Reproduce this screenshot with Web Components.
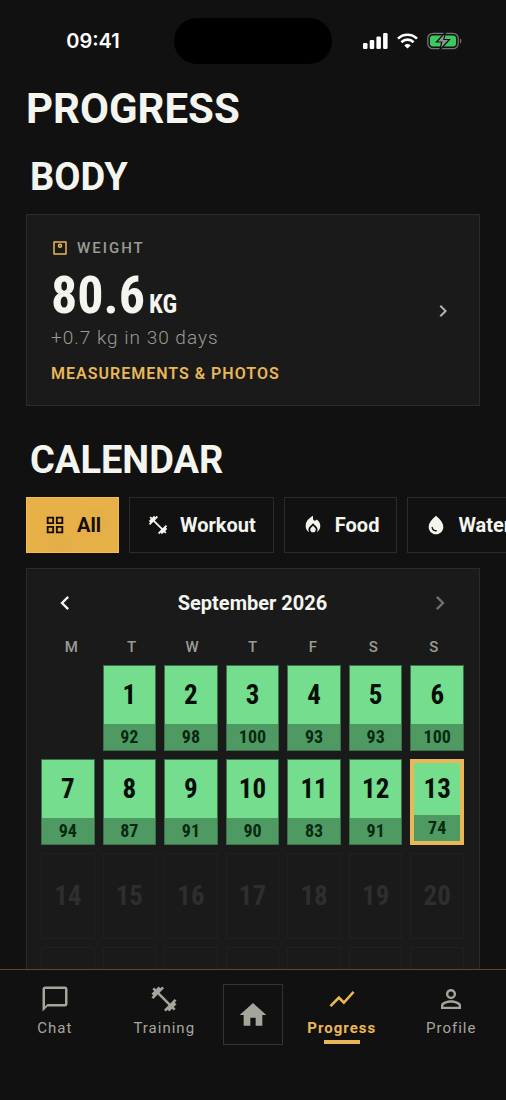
<!DOCTYPE html>
<html lang="en">
<head>
<meta charset="utf-8">
<meta name="viewport" content="width=device-width, initial-scale=1">
<title>Progress</title>
<style>
  :root {
    --bg: #111111;
    --card: #1a1a1a;
    --line: #2b2b2b;
    --ink: #f4f5ee;
    --muted: #9b9b94;
    --amber: #e9b757;
    --narrow: "Liberation Sans Narrow", "Roboto Condensed", "DejaVu Sans Condensed", sans-serif;
  }
  html, body { height: 100%; }
  body { margin: 0; background: var(--bg); color: var(--ink); font-family: Roboto, sans-serif; }
</style>
</head>
<body>
<progress-app></progress-app>
<script>
const ICONS = {
  dumbbell: 'M20.57 14.86L22 13.43 20.57 12 17 15.57 8.43 7 12 3.43 10.57 2 9.14 3.43 7.71 2 5.57 4.14 4.14 2.71 2.71 4.14l1.43 1.43L2 7.71l1.43 1.43L2 10.57 3.43 12 7 8.43 15.57 17 12 20.57 13.43 22l1.43-1.43L16.29 22l2.14-2.14 1.43 1.43 1.43-1.43-1.43-1.43L22 16.29z',
  grid: 'M3 3v8h8V3H3zm6 6H5V5h4v4zm-6 4v8h8v-8H3zm6 6H5v-4h4v4zm4-16v8h8V3h-8zm6 6h-4V5h4v4zm-6 4v8h8v-8h-8zm6 6h-4v-4h4v4z',
  fire: 'M16 6l-.44.55C14.38 8.02 12 7.19 12 5.3V2S4 6 4 13c0 2.92 1.56 5.47 3.89 6.86-.56-.79-.89-1.76-.89-2.8 0-1.32.52-2.56 1.47-3.5L12 10.1l3.53 3.47c.95.93 1.47 2.17 1.47 3.5 0 1.02-.31 1.96-.85 2.75 1.89-1.15 3.29-3.06 3.71-5.3.66-3.55-1.07-6.9-3.86-8.52zM12 12.9l-2.13 2.09C9.31 15.55 9 16.28 9 17.06 9 18.68 10.35 20 12 20s3-1.32 3-2.94c0-.78-.31-1.52-.87-2.07L12 12.9z',
  drop: 'M12 2c-5.33 4.55-8 8.48-8 11.8 0 4.98 3.8 8.2 8 8.2s8-3.22 8-8.2c0-3.32-2.67-7.25-8-11.8zm-4.17 12c.37 0 .67.26.74.62.41 2.22 2.28 2.98 3.64 2.87.43-.02.79.32.79.75 0 .4-.32.73-.72.75-2.13.13-4.62-1.09-5.19-4.12-.08-.45.28-.87.74-.87z',
  home: 'M10 20v-6h4v6h5v-8h3L12 3 2 12h3v8z',
  chart: 'M3.5 18.49l6-6.01 4 4L22 6.92l-1.41-1.41-7.09 7.97-4-4L2 16.99z',
  chat: 'M20 2H4c-1.1 0-2 .9-2 2v18l4-4h14c1.1 0 2-.9 2-2V4c0-1.1-.9-2-2-2zm0 14H6l-2 2V4h16v12z',
  person: 'M12 5.9a2.1 2.1 0 1 1 0 4.2 2.1 2.1 0 0 1 0-4.2m0 9c2.97 0 6.1 1.46 6.1 2.1v1.1H5.9V17c0-.64 3.13-2.1 6.1-2.1M12 4C9.79 4 8 5.79 8 8s1.79 4 4 4 4-1.79 4-4-1.79-4-4-4zm0 9c-2.67 0-8 1.34-8 4v3h16v-3c0-2.66-5.33-4-8-4z',
  next: 'M10 6L8.59 7.41 13.17 12l-4.58 4.59L10 18l6-6z',
  prev: 'M15.41 7.41L14 6l-6 6 6 6 1.41-1.41L10.83 12z',
  scale: 'M4 3h16a1 1 0 0 1 1 1v16a1 1 0 0 1-1 1H4a1 1 0 0 1-1-1V4a1 1 0 0 1 1-1zm1 2v14h14V5zM12 6a3 3 0 1 1 0 6 3 3 0 0 1 0-6zm-1 2.300v1.400h2V8.300z'
};

function define(name, render) {
  customElements.define(name, class extends HTMLElement {
    constructor() { super(); this.attachShadow({ mode: 'open' }); }
    connectedCallback() { this.shadowRoot.innerHTML = render(this); }
  });
}

define('ui-icon', el => `
  <style>
    :host { display: block; flex: none; width: var(--size, 24px); height: var(--size, 24px); }
    svg { display: block; width: 100%; height: 100%; fill: currentColor; }
  </style>
  <svg viewBox="0 0 24 24" aria-hidden="true"><path fill-rule="evenodd" d="${ICONS[el.getAttribute('name')]}"/></svg>`);

define('status-bar', () => `
  <style>
    :host { display: grid; grid-template-columns: 1fr 158px 1fr; align-items: center; padding: 18px 0 0; color: #fff; }
    time { justify-self: center; padding-left: 12px; font: 600 20px/24px Inter, sans-serif; }
    .island { height: 46px; border-radius: 23px; background: #000; }
    .signals { display: flex; align-items: center; justify-content: center; gap: 9px; padding-right: 14px; }
    svg { display: block; }
  </style>
  <time>09:41</time>
  <div class="island"></div>
  <div class="signals">
    <svg width="25" height="16" viewBox="0 0 25 16" fill="#fff"><rect y="10" width="4.500" height="6" rx="1.300"/><rect x="6.700" y="7" width="4.500" height="9" rx="1.300"/><rect x="13.400" y="3.500" width="4.500" height="12.500" rx="1.300"/><rect x="20.100" width="4.500" height="16" rx="1.300"/></svg>
    <svg width="21" height="16" viewBox="0 0 21 16" fill="none" stroke="#fff" stroke-width="2.700"><path d="M1 5.600a13.600 13.600 0 0 1 19 0M4.400 9.200a8.700 8.700 0 0 1 12.200 0"/><path d="M10.500 15.600L7.300 12.400a4.500 4.500 0 0 1 6.400 0z" fill="#fff" stroke="none"/></svg>
    <svg width="35" height="18" viewBox="0 0 35 18"><rect x=".8" y="1.300" width="30.400" height="15.400" rx="5" fill="none" stroke="#747474" stroke-width="1.300"/><rect x="3" y="3.500" width="26" height="11" rx="3" fill="#3bcb5e"/><path d="M33 6.500v5c1.800-.6 1.800-4.400 0-5z" fill="#747474"/><path d="M18.500 0L9.500 10h5.300l-2 8 9.700-10.500h-5.700z" fill="#929292" stroke="#111" stroke-width="1.200"/></svg>
  </div>`);

define('section-title', el => {
  const tag = el.hasAttribute('page') ? 'h1' : 'h2';
  return `
  <style>
    :host { display: block; }
    h1, h2 { margin: 0; font-weight: 700; }
    h1 { font-size: 42px; line-height: 48px; }
    h2 { padding-left: 4px; font-size: 38px; line-height: 44px; }
  </style>
  <${tag}><slot></slot></${tag}>`;
});

define('weight-card', () => `
  <style>
    :host { display: block; }
    a { display: flex; align-items: center; justify-content: space-between; box-sizing: border-box; min-height: 192px; padding: 24px 24px 22px; border: 1px solid var(--line); background: var(--card); color: inherit; text-decoration: none; }
    .label { display: flex; align-items: center; gap: 8px; font-size: 15px; line-height: 18px; font-weight: 500; letter-spacing: 2px; color: var(--muted); }
    .label ui-icon { --size: 18px; color: var(--amber); }
    .value { display: flex; align-items: baseline; gap: 4px; margin-top: 10px; font: 700 52px/58px var(--narrow); }
    .unit { font-size: 25px; line-height: 28px; }
    .delta { margin-top: 1px; font-size: 19px; line-height: 24px; font-weight: 300; letter-spacing: 1px; color: var(--muted); }
    .more { margin-top: 15px; font-size: 16px; line-height: 18px; font-weight: 600; letter-spacing: 1px; color: var(--amber); }
    .go { --size: 24px; color: #b4b4ae; }
  </style>
  <a href="#measurements">
    <div>
      <div class="label"><ui-icon name="scale"></ui-icon>WEIGHT</div>
      <div class="value"><span>80.6</span><span class="unit">KG</span></div>
      <div class="delta">+0.7 kg in 30 days</div>
      <div class="more">MEASUREMENTS &amp; PHOTOS</div>
    </div>
    <ui-icon class="go" name="next"></ui-icon>
  </a>`);

define('filter-chip', el => `
  <style>
    :host { display: block; flex: none; }
    button { display: flex; align-items: center; gap: 11px; height: 56px; padding: 0 17px; border: 1px solid var(--line); background: transparent; color: var(--ink); font: 700 20px/24px Roboto, sans-serif; white-space: nowrap; }
    button[aria-pressed="true"] { border-color: #efbd56; color: #160d04;
      background: radial-gradient(circle at 75% 45%, #d9a64666, transparent 30%), radial-gradient(circle at 35% 90%, #dca84466, transparent 35%), #e8b148; }
    ui-icon { --size: 22px; }
  </style>
  <button type="button" aria-pressed="${el.hasAttribute('active')}"><ui-icon name="${el.getAttribute('icon')}"></ui-icon><slot></slot></button>`);

define('filter-bar', () => `
  <style>
    :host { display: flex; gap: 10px; overflow-x: auto; scrollbar-width: none; }
  </style>
  <slot></slot>`);

define('day-cell', el => {
  const score = el.getAttribute('score');
  return `
  <style>
    :host { display: block; min-width: 0; }
    button { display: flex; flex-direction: column; width: 100%; height: 86px; padding: 0; border: 1px solid #3d7049; background: #74de8e; color: #050d07; font: 700 27px/32px var(--narrow); text-align: center; }
    .day { flex: 1; display: grid; place-items: center; width: 100%; }
    .score { width: 100%; background: #4f9a63; color: #062a10; font-size: 18px; line-height: 26px; }
    button.today { border: 4px solid var(--amber); }
    button:disabled { border-color: #202020; background: transparent; color: #2e2e2e; }
  </style>
  <button type="button" class="${el.hasAttribute('today') ? 'today' : ''}" ${score ? '' : 'disabled'}>
    <span class="day">${el.getAttribute('day')}</span>${score ? `<span class="score">${score}</span>` : ''}
  </button>`;
});

define('month-calendar', () => {
  const scores = [92, 98, 100, 93, 93, 100, 94, 87, 91, 90, 83, 91, 74];
  let cells = '<span></span>';
  for (let d = 1; d <= 30; d++) {
    cells += `<day-cell day="${d}" ${scores[d - 1] ? `score="${scores[d - 1]}"` : ''} ${d === 13 ? 'today' : ''}></day-cell>`;
  }
  return `
  <style>
    :host { display: block; padding: 14px 15px 15px 14px; border: 1px solid var(--line); background: var(--card); }
    header { display: flex; align-items: center; justify-content: space-between; height: 40px; padding: 0 4px; }
    h3 { margin: 0; font-size: 20px; line-height: 24px; font-weight: 700; }
    header button { display: grid; place-items: center; width: 40px; height: 40px; padding: 0; border: 0; background: none; color: var(--ink); }
    header button:disabled { color: #6f6f6c; }
    header ui-icon { --size: 28px; }
    .week { display: grid; grid-template-columns: repeat(7, 1fr); margin: 14px 0 8px; font-size: 15px; line-height: 20px; font-weight: 500; text-align: center; color: var(--muted); }
    .days { display: grid; grid-template-columns: repeat(7, minmax(0, 1fr)); gap: 8px; }
  </style>
  <header>
    <button type="button" aria-label="Previous month"><ui-icon name="prev"></ui-icon></button>
    <h3>September 2026</h3>
    <button type="button" aria-label="Next month" disabled><ui-icon name="next"></ui-icon></button>
  </header>
  <div class="week">${[...'MTWTFSS'].map(d => `<span>${d}</span>`).join('')}</div>
  <div class="days">${cells}</div>`;
});

define('nav-item', el => `
  <style>
    :host { display: block; flex: 1; min-width: 0; }
    a { display: flex; flex-direction: column; align-items: center; color: #a5a69b; font-size: 15px; line-height: 18px; letter-spacing: 1px; text-decoration: none; }
    ui-icon { --size: 30px; margin-bottom: 5px; }
    a.on { color: var(--amber); font-weight: 700; }
    a.on::after { content: ""; width: 36px; height: 4px; margin-top: 3px; background: var(--amber); }
  </style>
  <a href="#${el.getAttribute('icon')}" class="${el.hasAttribute('active') ? 'on' : ''}"><ui-icon name="${el.getAttribute('icon')}"></ui-icon><slot></slot></a>`);

define('tab-bar', () => `
  <style>
    :host { display: block; flex: none; border-top: 1px solid #5e4b20; background: var(--bg); }
    nav { display: flex; padding: 14px 0 55px; }
    .home { display: grid; place-items: center; box-sizing: border-box; width: 60px; height: 61px; margin: 0 4px; border: 1px solid #333; color: #a5a69b; }
    .home ui-icon { --size: 32px; }
  </style>
  <nav>
    <nav-item icon="chat">Chat</nav-item>
    <nav-item icon="dumbbell">Training</nav-item>
    <a class="home" href="#home" aria-label="Home"><ui-icon name="home"></ui-icon></a>
    <nav-item icon="chart" active>Progress</nav-item>
    <nav-item icon="person">Profile</nav-item>
  </nav>`);

define('progress-app', () => `
  <style>
    :host { display: flex; flex-direction: column; height: 100vh; }
    main { flex: 1; min-height: 0; overflow: hidden auto; scrollbar-width: none; padding: 0 26px; }
    status-bar { margin: 0 -26px; }
    .page { margin-top: 21px; }
    .body { margin: 22px 0 15px; }
    .cal { margin: 32px 0 15px; }
    filter-bar { margin: 0 -26px 15px 0; }
    month-calendar { margin-bottom: 24px; }
  </style>
  <main>
    <status-bar></status-bar>
    <section-title page class="page">PROGRESS</section-title>
    <section-title class="body">BODY</section-title>
    <weight-card></weight-card>
    <section-title class="cal">CALENDAR</section-title>
    <filter-bar>
      <filter-chip icon="grid" active>All</filter-chip>
      <filter-chip icon="dumbbell">Workout</filter-chip>
      <filter-chip icon="fire">Food</filter-chip>
      <filter-chip icon="drop">Water</filter-chip>
    </filter-bar>
    <month-calendar></month-calendar>
  </main>
  <tab-bar></tab-bar>`);
</script>
</body>
</html>
